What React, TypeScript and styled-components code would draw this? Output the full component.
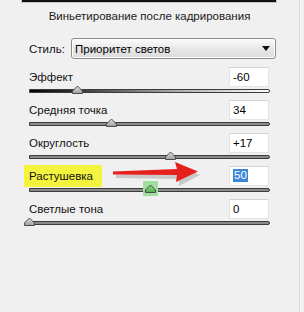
import styled, { createGlobalStyle, css } from "styled-components";

const GlobalStyle = createGlobalStyle`
    html, body {
        margin: 0;
        padding: 0;
        background: #f0f0f0;
    }
    body {
        font-family: "Liberation Sans", Arial, sans-serif;
        font-size: 11.5px;
        color: #000;
    }
`

type FieldData = {
    label: string
    value: string
    num: number
    min: number
    max: number
    gradient?: boolean
    marked?: boolean
}

const fields: FieldData[] = [
    { label: "Эффект", value: "-60", num: -60, min: -100, max: 100, gradient: true },
    { label: "Средняя точка", value: "34", num: 34, min: 0, max: 100 },
    { label: "Округлость", value: "+17", num: 17, min: -100, max: 100 },
    { label: "Растушевка", value: "50", num: 50, min: 0, max: 100, marked: true },
    { label: "Светлые тона", value: "0", num: 0, min: 0, max: 100 },
]

const Page = styled.div`
    width: 304px;
    height: 312px;
    background: #f0f0f0;
    overflow: hidden;
`

const Panel = styled.div`
    position: relative;
    width: 299px;
    height: 312px;
    border-right: 1px solid #d6d6d6;
    box-shadow: 1px 0 0 #fbfbfb;
    display: flex;
    flex-direction: column;
`

const PrevBox = styled.div`
    height: 2px;
    margin: 0 22px 0 21px;
    background: #111;
    border: 1px solid #c4c4c4;
    border-top: none;
`

const Title = styled.div`
    margin-top: 6px;
    line-height: 14px;
    text-align: center;
    color: #1a1a1a;
`

const StyleRow = styled.div`
    margin: 15px 0 0 29px;
    display: flex;
    align-items: center;
`

const Label = styled.span<{ $marked?: boolean }>`
    line-height: 14px;
    color: #111;
    ${p => p.$marked && css`
        background: #f4f43c;
        padding: 4px 9px 4px 5px;
        margin-left: -5px;
    `}
`

const StyleLabel = styled(Label)`
    width: 42px;
`

const Select = styled.div`
    width: 195px;
    height: 19px;
    border: 1px solid #8c8c8c;
    border-radius: 3px;
    background: linear-gradient(#fbfbfb, #e6e6e6 55%, #dcdcdc);
    box-shadow: inset 0 0 0 1px #fff;
    display: flex;
    align-items: center;
    justify-content: space-between;
    padding: 0 5px 0 3px;
    box-sizing: content-box;
`

const Caret = styled.span`
    width: 0;
    height: 0;
    border-left: 4px solid transparent;
    border-right: 4px solid transparent;
    border-top: 5px solid #111;
`

const Fields = styled.div`
    margin: 7px 0 0 29px;
    width: 241px;
    display: flex;
    flex-direction: column;
`

const Field = styled.div`
    display: flex;
    flex-direction: column;
`

const FieldHead = styled.div`
    height: 21px;
    display: flex;
    align-items: center;
    justify-content: space-between;
`

const NumInput = styled.div`
    width: 40px;
    height: 20px;
    margin-right: 1px;
    background: #fff;
    border: 1px solid #e4e4e4;
    border-top-color: #d4d4d4;
    display: flex;
    align-items: center;
    padding-left: 3px;
    box-sizing: border-box;
    line-height: 14px;
`

const Selected = styled.span`
    background: #3d86d8;
    color: #fff;
    padding: 0 1px;
    line-height: 13px;
`

const SliderBox = styled.div`
    position: relative;
    height: 12px;
`

const Track = styled.div<{ $gradient?: boolean }>`
    position: absolute;
    left: 0;
    right: 0;
    top: 2px;
    height: 2px;
    border: 1px solid #3c3c3c;
    border-radius: 0 2px 2px 0;
    background: ${p => p.$gradient
        ? "linear-gradient(90deg, #000 0%, #444 25%, #aaa 60%, #fff 100%)"
        : "#8a8a8a"};
`

const ThumbWrap = styled.div<{ $marked?: boolean }>`
    position: absolute;
    top: -4px;
    width: 15px;
    height: 14px;
    margin-left: -7px;
    display: flex;
    align-items: center;
    justify-content: center;
    ${p => p.$marked && css`
        top: -5px;
        height: 15px;
        background: #9fdf9f;
    `}
`

const ArrowMark = styled.svg`
    position: absolute;
    left: 108px;
    top: 160px;
`

const Thumb = ({ marked }: { marked?: boolean }) => (
    <svg width="13" height="10" viewBox="0 0 13 10">
        <defs>
            <linearGradient id={marked ? "tg" : "tn"} x1="0" y1="0" x2="0" y2="1">
                <stop offset="0" stopColor={marked ? "#9ad89a" : "#e4e4e4"} />
                <stop offset="1" stopColor={marked ? "#4fae4f" : "#9c9c9c"} />
            </linearGradient>
        </defs>
        <path
            d="M1.5 8.5 L1.5 6 L6.5 1 L11.5 6 L11.5 8.5 Z"
            fill={`url(#${marked ? "tg" : "tn"})`}
            stroke="#4a4a4a"
            strokeWidth="1"
            strokeLinejoin="round"
        />
    </svg>
)

const Slider = ({ f }: { f: FieldData }) => {
    const pos = ((f.num - f.min) / (f.max - f.min)) * 100
    return (
        <SliderBox>
            <Track $gradient={f.gradient} />
            <ThumbWrap $marked={f.marked} style={{ left: `${pos}%` }}>
                <Thumb marked={f.marked} />
            </ThumbWrap>
        </SliderBox>
    )
}

const App = () => {
    return (
        <Page>
            <GlobalStyle />
            <Panel>
                <PrevBox />
                <Title>Виньетирование после кадрирования</Title>
                <StyleRow>
                    <StyleLabel>Стиль:</StyleLabel>
                    <Select>
                        <span>Приоритет светов</span>
                        <Caret />
                    </Select>
                </StyleRow>
                <Fields>
                    {fields.map(f => (
                        <Field key={f.label}>
                            <FieldHead>
                                <Label $marked={f.marked}>{f.label}</Label>
                                <NumInput>
                                    {f.marked ? <Selected>{f.value}</Selected> : f.value}
                                </NumInput>
                            </FieldHead>
                            <Slider f={f} />
                        </Field>
                    ))}
                </Fields>
                <ArrowMark width="96" height="28" viewBox="0 0 96 28">
                    <path d="M6 13 L69 10 L68 4 L90 13 L69 24 L69 17 L6 16 Z" fill="#8f8f8f" opacity="0.4" transform="translate(2 2)" />
                    <path d="M5 11.5 L69 9 L67 2 L90 11.5 L68 22 L69 15 L5 14.5 Z" fill="#e5211d" />
                </ArrowMark>
            </Panel>
        </Page>
    );
}

export default App;
